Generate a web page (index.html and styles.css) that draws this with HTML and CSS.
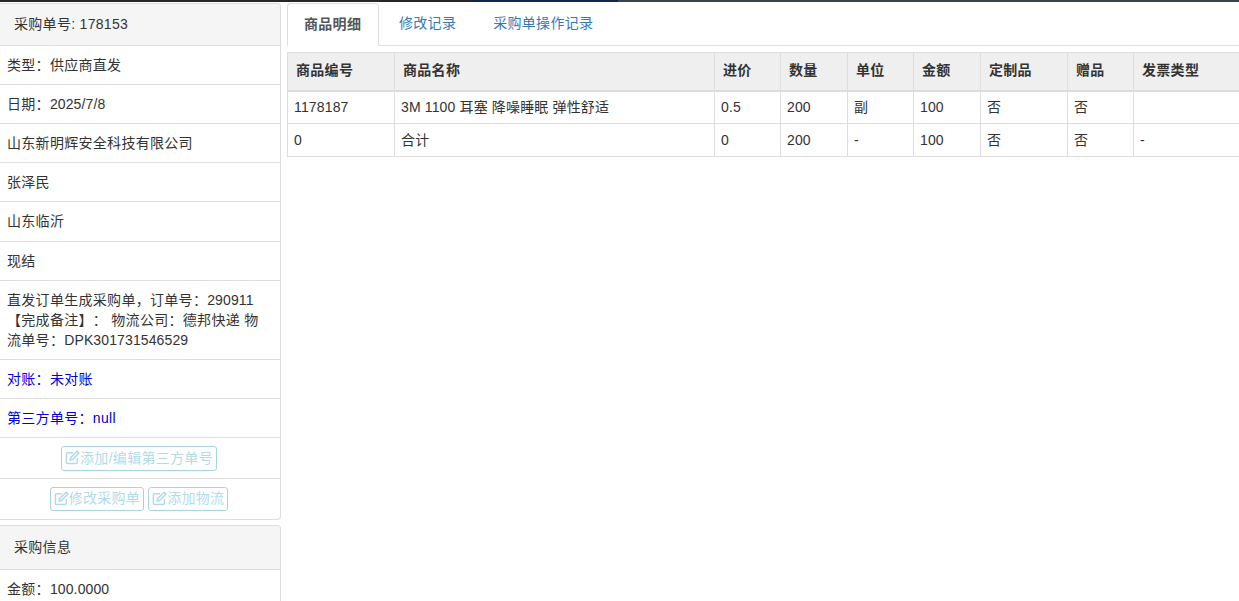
FILE: index.html
```html
<!DOCTYPE html>
<html lang="zh">
<head>
<meta charset="utf-8">
<title>采购单</title>
<link rel="stylesheet" href="styles.css">
</head>
<body>
<div class="topbar"></div>
<div class="layout">
  <aside class="side">
    <section class="panel">
      <div class="panel-head">采购单号: 178153</div>
      <ul class="list">
        <li>类型：供应商直发</li>
        <li>日期：<span class="num">2025/7/8</span></li>
        <li>山东新明辉安全科技有限公司</li>
        <li>张泽民</li>
        <li class="tall">山东临沂</li>
        <li>现结</li>
        <li>直发订单生成采购单，订单号：<span class="num">290911</span> 【完成备注】： 物流公司：德邦快递 物流单号：<span class="num">DPK301731546529</span></li>
        <li class="blue">对账：未对账</li>
        <li class="blue">第三方单号：null</li>
        <li class="actions"><a class="btn"><svg class="ico" viewBox="0 0 14 14"><path d="M11.5 7.5v4a1.2 1.2 0 0 1-1.2 1.2H2.5a1.2 1.2 0 0 1-1.2-1.2V3.7a1.2 1.2 0 0 1 1.2-1.2h5"/><path d="M4.8 9.4l.5-2.2 6-6 1.7 1.7-6 6z"/></svg>添加/编辑第三方单号</a></li>
        <li class="actions"><a class="btn"><svg class="ico" viewBox="0 0 14 14"><path d="M11.5 7.5v4a1.2 1.2 0 0 1-1.2 1.2H2.5a1.2 1.2 0 0 1-1.2-1.2V3.7a1.2 1.2 0 0 1 1.2-1.2h5"/><path d="M4.8 9.4l.5-2.2 6-6 1.7 1.7-6 6z"/></svg>修改采购单</a><a class="btn"><svg class="ico" viewBox="0 0 14 14"><path d="M11.5 7.5v4a1.2 1.2 0 0 1-1.2 1.2H2.5a1.2 1.2 0 0 1-1.2-1.2V3.7a1.2 1.2 0 0 1 1.2-1.2h5"/><path d="M4.8 9.4l.5-2.2 6-6 1.7 1.7-6 6z"/></svg>添加物流</a></li>
      </ul>
    </section>
    <section class="panel">
      <div class="panel-head">采购信息</div>
      <ul class="list">
        <li>金额：<span class="num">100.0000</span></li>
      </ul>
    </section>
  </aside>
  <main class="content">
    <nav class="tabs">
      <a class="tab active">商品明细</a>
      <a class="tab">修改记录</a>
      <a class="tab">采购单操作记录</a>
    </nav>
    <table class="grid">
      <colgroup>
        <col class="c1"><col class="c2"><col class="c3"><col class="c4"><col class="c5"><col class="c6"><col class="c7"><col class="c8"><col class="c9">
      </colgroup>
      <thead>
        <tr><th>商品编号</th><th>商品名称</th><th>进价</th><th>数量</th><th>单位</th><th>金额</th><th>定制品</th><th>赠品</th><th>发票类型</th></tr>
      </thead>
      <tbody>
        <tr><td>1178187</td><td>3M 1100 耳塞 降噪睡眠 弹性舒适</td><td>0.5</td><td>200</td><td>副</td><td>100</td><td>否</td><td>否</td><td></td></tr>
        <tr><td>0</td><td>合计</td><td>0</td><td>200</td><td>-</td><td>100</td><td>否</td><td>否</td><td>-</td></tr>
      </tbody>
    </table>
  </main>
</div>
</body>
</html>
```
FILE: styles.css
```css
* { box-sizing: border-box; }
html, body { margin: 0; height: 100%; overflow: hidden; background: #fff; }
body { font-family: "Liberation Sans", "Noto Sans CJK SC", sans-serif; font-size: 14px; line-height: 20px; color: #333; letter-spacing: .3px; text-spacing-trim: space-all; }
.num { letter-spacing: .12px; }
.topbar { height: 2px; background: linear-gradient(to right, #26272b 0, #26272b 470px, #12264a 470px, #12264a 618px, #37424a 618px); }
.layout { display: flex; padding-top: 1px; }
.side { width: 281px; flex: none; display: flex; flex-direction: column; gap: 5px; }
.panel { border: 1px solid #ddd; border-left: 0; border-radius: 0 4px 4px 0; background: #fff; }
.panel-head { height: 42px; padding: 10px 14px; background: #f5f5f5; border-bottom: 1px solid #ddd; border-top-right-radius: 3px; }
.panel + .panel .panel-head { height: 44px; padding-top: 11px; }
.list { list-style: none; margin: 0; padding: 0; }
.list li { padding: 9px 10px 9px 7px; border-bottom: 1px solid #ddd; }
.list li.tall { padding-bottom: 10px; }
.list li:last-child { border-bottom: 0; }
.list li.blue { color: #0000d8; }
.list li.actions { padding: 8px 9px 8px 7px; height: 41px; display: flex; justify-content: center; align-items: flex-start; gap: 4px; }
.list li.actions:last-child { height: 40px; }
.btn { display: inline-flex; align-items: center; height: 25px; padding: 0 3px 2px 3px; border: 1px solid #a6d5e2; border-radius: 3px; color: #b2dbe8; }
.actions:last-child .btn { height: 24px; }
.ico { width: 15px; height: 15px; fill: none; stroke: #b2dbe8; stroke-width: 1.4; }
.content { flex: 1; min-width: 0; padding-left: 6px; }
.tabs { display: flex; height: 43px; border-bottom: 1px solid #ddd; }
.tab { padding: 10px 18px 10px 19px; color: #337ab7; height: 43px; }
.tab.active { padding: 10px 16px; width: 92px; margin-right: 1px; color: #555; font-weight: 700; background: #fff; border: 1px solid #ddd; border-bottom-color: #fff; border-radius: 4px 4px 0 0; }
.grid { margin-top: 6px; width: 960px; table-layout: fixed; border-collapse: collapse; }
.c1 { width: 107px; } .c2 { width: 320px; } .c3 { width: 66px; } .c4 { width: 67px; } .c5 { width: 66px; } .c6 { width: 67px; } .c7 { width: 87px; } .c8 { width: 66px; } .c9 { width: 114px; }
.grid th, .grid td { border: 1px solid #ddd; text-align: left; }
.grid th { height: 38px; padding: 6px 8px 8px; background: #efefef; font-weight: 700; border-bottom-width: 2px; }
.grid td { height: 33px; padding: 5px 6px; letter-spacing: .15px; }
```
